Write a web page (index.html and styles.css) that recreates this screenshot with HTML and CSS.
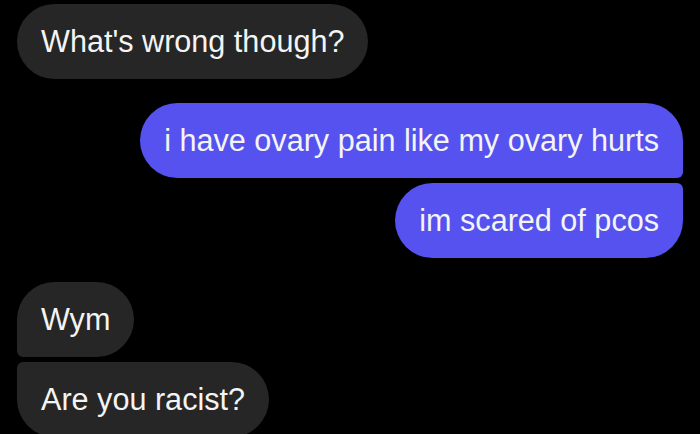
FILE: index.html
```html
<!DOCTYPE html>
<html lang="en">
<head>
    <meta charset="UTF-8">
    <meta name="viewport" content="width=device-width, initial-scale=1.0">
    <title>Messages</title>
    <link rel="stylesheet" href="styles.css">
</head>
<body>
    <div class="thread">
        <div class="group theirs">
            <div class="bubble">What's wrong though?</div>
        </div>

        <div class="group mine">
            <div class="bubble first">i have ovary pain like my ovary hurts</div>
            <div class="bubble last">im scared of pcos</div>
        </div>

        <div class="group theirs">
            <div class="bubble first">Wym</div>
            <div class="bubble last">Are you racist?</div>
        </div>
    </div>
</body>
</html>
```

FILE: styles.css
```css
body {
    margin: 0;
    background: #000;
    font-family: "Liberation Sans", Arial, sans-serif;
    color: #f4f4f4;
    overflow: hidden;
}
.thread {
    display: flex;
    flex-direction: column;
    gap: 24px;
    padding: 4px 17px 0 17px;
}
.group {
    display: flex;
    flex-direction: column;
    gap: 5px;
}
.mine {
    align-items: flex-end;
}
.theirs {
    align-items: flex-start;
}
.bubble {
    height: 75px;
    box-sizing: border-box;
    padding: 0 24px;
    display: flex;
    align-items: center;
    font-size: 30.6px;
    white-space: nowrap;
    border-radius: 37.5px;
}
.theirs .bubble {
    background: #262626;
}
.mine .bubble {
    background: #5552ef;
}
/* joined corners inside a group */
.theirs .first {
    border-bottom-left-radius: 6px;
}
.theirs .last {
    border-top-left-radius: 6px;
}
.mine .first {
    border-bottom-right-radius: 6px;
}
.mine .last {
    border-top-right-radius: 6px;
}
```
